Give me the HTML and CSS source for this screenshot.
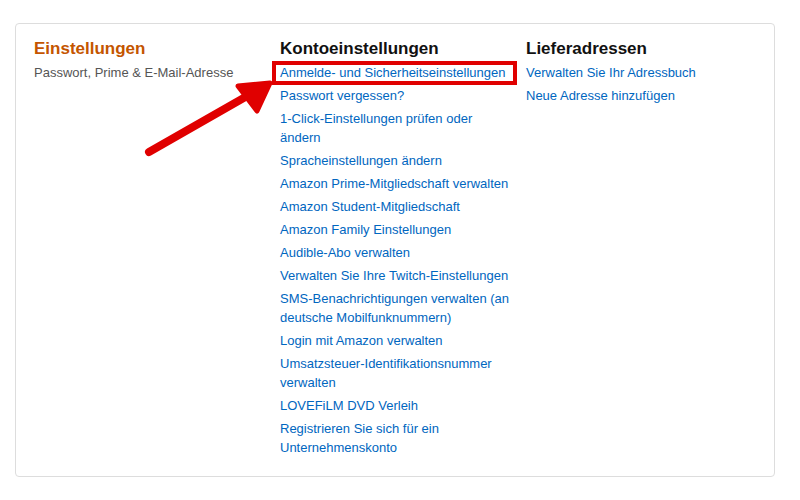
FILE: index.html
```html
<!DOCTYPE html>
<html lang="de">
<head>
<meta charset="utf-8">
<link rel="stylesheet" href="styles.css">
</head>
<body>
<div class="page">
  <div class="box">
    <div class="col">
      <h2 class="title orange">Einstellungen</h2>
      <p class="desc">Passwort, Prime &amp; E-Mail-Adresse</p>
    </div>
    <div class="col">
      <h2 class="title">Kontoeinstellungen</h2>
      <ul class="links">
        <li class="marked"><a href="#">Anmelde- und Sicherheitseinstellungen</a></li>
        <li><a href="#">Passwort vergessen?</a></li>
        <li><a href="#">1-Click-Einstellungen prüfen oder ändern</a></li>
        <li><a href="#">Spracheinstellungen ändern</a></li>
        <li><a href="#">Amazon Prime-Mitgliedschaft verwalten</a></li>
        <li><a href="#">Amazon Student-Mitgliedschaft</a></li>
        <li><a href="#">Amazon Family Einstellungen</a></li>
        <li><a href="#">Audible-Abo verwalten</a></li>
        <li><a href="#">Verwalten Sie Ihre Twitch-Einstellungen</a></li>
        <li><a href="#">SMS-Benachrichtigungen verwalten (an deutsche Mobilfunknummern)</a></li>
        <li><a href="#">Login mit Amazon verwalten</a></li>
        <li><a href="#">Umsatzsteuer-Identifikationsnummer verwalten</a></li>
        <li><a href="#">LOVEFiLM DVD Verleih</a></li>
        <li><a href="#">Registrieren Sie sich für ein Unternehmenskonto</a></li>
      </ul>
    </div>
    <div class="col last">
      <h2 class="title">Lieferadressen</h2>
      <ul class="links">
        <li><a href="#">Verwalten Sie Ihr Adressbuch</a></li>
        <li><a href="#">Neue Adresse hinzufügen</a></li>
      </ul>
    </div>
  </div>
  <svg class="arrow" width="800" height="500" viewBox="0 0 800 500">
    <line x1="149" y1="152" x2="256" y2="91" stroke="#e00000" stroke-width="8" stroke-linecap="round"/>
    <polygon points="270,83 238,86 257,111" fill="#e00000" stroke="#e00000" stroke-width="5" stroke-linejoin="round"/>
  </svg>
</div>
</body>
</html>
```

FILE: styles.css
```css
*, *::before, *::after { box-sizing: border-box; }
html, body { margin: 0; padding: 0; background: #fff; }
body {
  font-family: "Liberation Sans", Arial, sans-serif;
  font-size: 13px;
  color: #111;
}
.page {
  position: relative;
  width: 800px;
  height: 500px;
  padding: 23px 25px 0 15px;
}
.box {
  display: flex;
  border: 1px solid #ddd;
  border-radius: 4px;
  padding: 14px 0 19px 18px;
}
.col {
  flex: 0 0 246px;
  padding-right: 10px;
}
.col.last { flex: 1 1 auto; }
.title {
  margin: 0 0 4px 0;
  font-size: 17px;
  line-height: 21px;
  font-weight: bold;
  color: #111;
}
.title.orange { color: #c45500; }
.desc {
  margin: 0;
  line-height: 19px;
  color: #555;
}
.links {
  list-style: none;
  margin: 0;
  padding: 0;
}
.links li {
  line-height: 19px;
  margin-bottom: 4px;
}
.links li:last-child { margin-bottom: 0; }
.links a {
  color: #0066c0;
  text-decoration: none;
}
.marked { position: relative; }
.marked::after {
  content: "";
  position: absolute;
  left: -8px;
  top: -2px;
  width: 245px;
  height: 24px;
  border: 4px solid #e00000;
}
.arrow {
  position: absolute;
  left: 0;
  top: 0;
  pointer-events: none;
}
```
